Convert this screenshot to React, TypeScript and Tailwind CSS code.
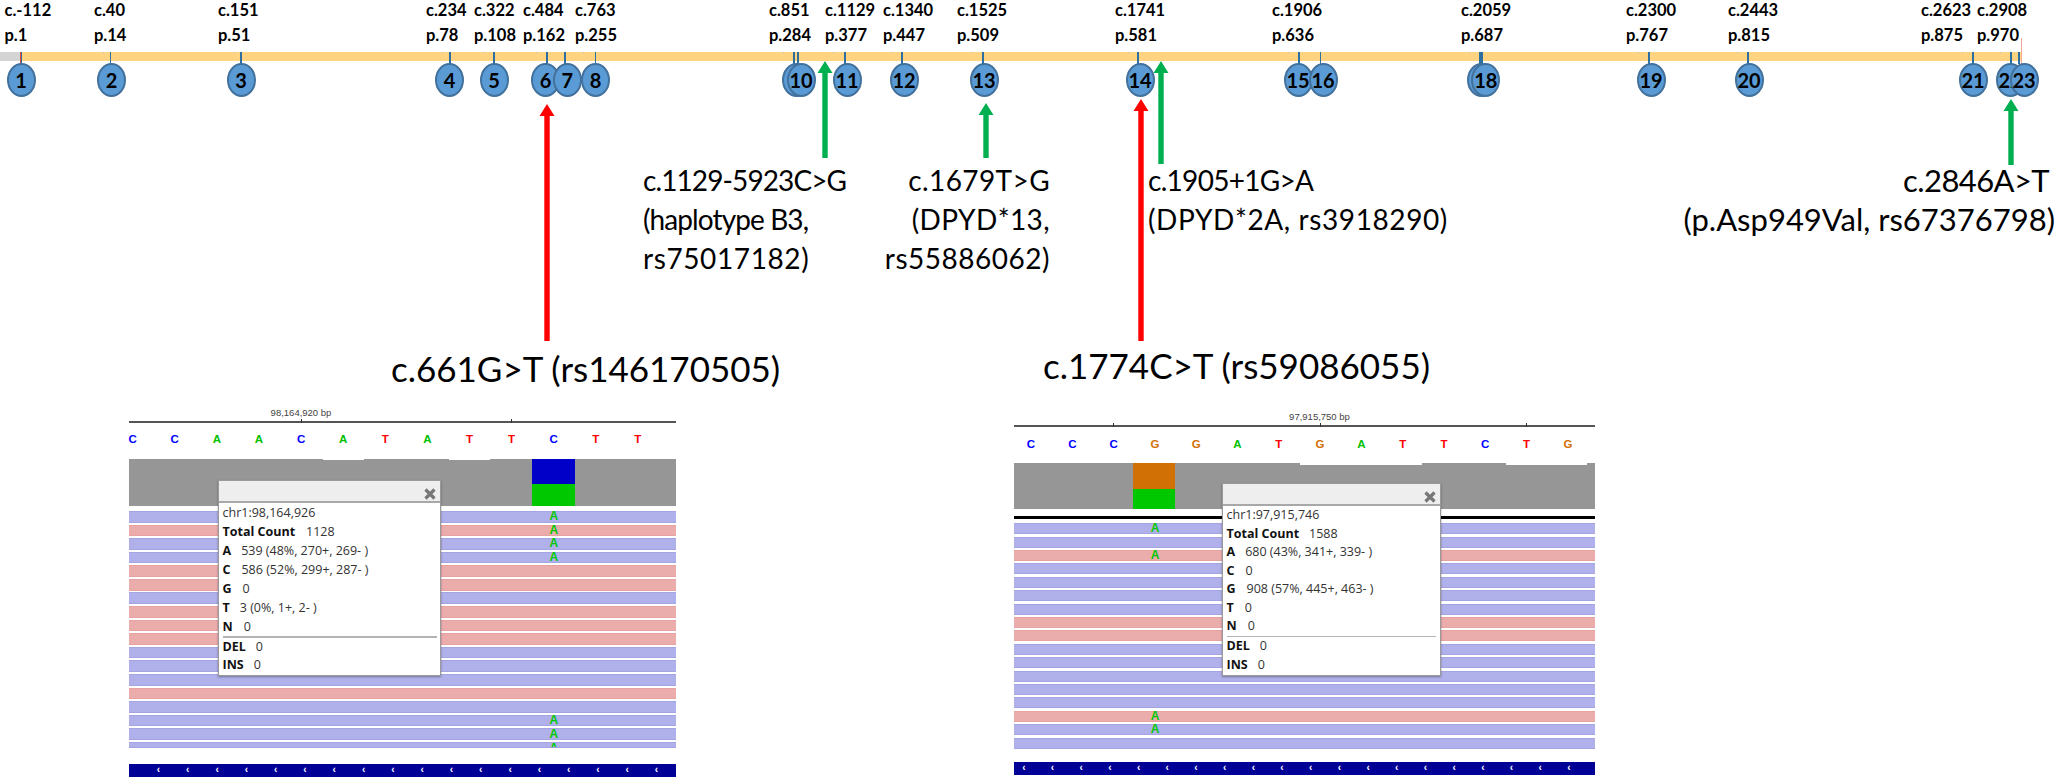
import React from "react";

const labels: [string, string, number][] = [
  ["c.-112", "p.1", 4.5], ["c.40", "p.14", 94], ["c.151", "p.51", 218], ["c.234", "p.78", 426],
  ["c.322", "p.108", 474], ["c.484", "p.162", 523], ["c.763", "p.255", 575], ["c.851", "p.284", 769],
  ["c.1129", "p.377", 825], ["c.1340", "p.447", 883], ["c.1525", "p.509", 957], ["c.1741", "p.581", 1115],
  ["c.1906", "p.636", 1272], ["c.2059", "p.687", 1461], ["c.2300", "p.767", 1626], ["c.2443", "p.815", 1728],
  ["c.2623", "p.875", 1921], ["c.2908", "p.970", 1977],
];
const ticks = [21.4, 110.7, 241, 450, 494, 547, 565, 595.5, 794, 798, 845, 902, 983, 1138, 1299, 1320.5, 1480, 1482, 1649, 1748, 1973, 2011, 2019];
const faint = [102.7, 234, 442, 483, 536, 583, 782.6, 833, 891, 971, 1128, 1288, 1469, 1638, 1737, 1962, 2000];
const circles: [string, number][] = [
  ["1", 21], ["2", 111.6], ["3", 241], ["4", 449.6], ["5", 494], ["6", 545.5], ["7", 567.4], ["8", 595.5],
  ["", 796], ["10", 801], ["11", 847], ["12", 904], ["13", 984], ["14", 1140], ["15", 1298], ["16", 1323],
  ["", 1481.6], ["18", 1485.8], ["19", 1651], ["20", 1749], ["21", 1973], ["22", 2010], ["23", 2024],
];

function Arrow({ x, top, bottom, color }: { x: number; top: number; bottom: number; color: string }) {
  const h = bottom - top;
  return (
    <svg className="absolute" style={{ left: x - 8, top }} width={16} height={h} viewBox={`0 0 16 ${h}`}>
      <polygon points={`8,0 15.5,12 10.7,12 10.7,${h} 5.3,${h} 5.3,12 0.5,12`} fill={color} />
    </svg>
  );
}

const letterColor: Record<string, string> = { C: "text-[#0000ff]", A: "text-[#00c000]", T: "text-[#ff0000]", G: "text-[#d17105]" };

function Mark() {
  return <span className="block w-[8px] text-center font-['Liberation_Sans',sans-serif] text-[12px] font-bold leading-[11px] text-[#00c800]">A</span>;
}

function CloseIcon() {
  return (
    <svg className="absolute right-[4px] bottom-[1px]" width="12" height="12" viewBox="0 0 12 12">
      <path d="M1.5 1.5 L10.5 10.5 M10.5 1.5 L1.5 10.5" stroke="#777777" strokeWidth="3.2" />
    </svg>
  );
}

type PopLine = { b: string; v?: string; cls: string };

function Popup({ pos, coord, lines, lower, row }: { pos: string; coord: string; lines: PopLine[]; lower: PopLine[]; row: string }) {
  return (
    <div className={`absolute flex flex-col border border-[#9a9a9a] bg-white shadow-[0_1px_2px_rgba(0,0,0,0.35)] font-['Open_Sans',sans-serif] text-[12.5px] text-[#333333] ${pos}`}>
      <div className="relative h-[22px] shrink-0 border-b-2 border-[#a8a8a8] bg-[#eeeeee]">
        <CloseIcon />
      </div>
      <div className="flex flex-col px-[3.5px]">
        <div className={row}>{coord}</div>
        {lines.map((l) => (
          <div key={l.b} className={`flex ${row}`}>
            <b className="font-bold text-[#111111]">{l.b}</b>
            <span className={l.cls}>{l.v}</span>
          </div>
        ))}
        <div className="h-[1.5px] bg-[#b4b4b4]" />
        {lower.map((l) => (
          <div key={l.b} className="flex h-[18.5px] leading-[18.5px]">
            <b className="font-bold text-[#111111]">{l.b}</b>
            <span className={l.cls}>{l.v}</span>
          </div>
        ))}
      </div>
    </div>
  );
}

function Read({ color, mark, pad, size, clip }: { color: "b" | "r"; mark: boolean; pad: string; size: string; clip?: boolean }) {
  return (
    <div
      className={`flex border-y ${clip ? "items-start overflow-hidden" : "items-center"} ${size} ${pad} ${
        color === "b" ? "border-[#a4a4e4] bg-[#b0b0ea]" : "border-[#e8a2a2] bg-[#ebacac]"
      }`}
    >
      {mark && <Mark />}
    </div>
  );
}

function Chevrons({ n, cls }: { n: number; cls: string }) {
  return (
    <div className={`flex h-full items-center font-['Liberation_Sans',sans-serif] text-[10px] font-bold leading-none text-white ${cls}`}>
      {Array.from({ length: n }).map((_, i) => (
        <span key={i} className="block w-[var(--s)] shrink-0 text-center">‹</span>
      ))}
    </div>
  );
}

const baseFont = "font-['Lato',sans-serif]";

export default function App() {
  const seq1 = "CCAACATATTCTT".split("");
  const seq2 = "CCCGGATGATTCTG".split("");
  const reads1 = "brbbrrbrrrbbbrbbb".split("") as ("b" | "r")[];
  const marks1 = new Set([0, 1, 2, 3, 15, 16]);
  const reads2 = "bbrbbbbrrbbbbbrbb".split("") as ("b" | "r")[];
  const marks2 = new Set([0, 2, 14, 15]);

  return (
    <div className={`relative h-[780px] w-[2056px] overflow-hidden bg-white text-black ${baseFont}`}>
      {/* Gene track */}
      <div className="absolute left-0 top-[52px] flex h-[9px] w-[2021px]">
        <div className="w-[20px] bg-[#d4d4d4]" />
        <div className="flex-1 bg-[#ffd37f]" />
      </div>
      {faint.map((x) => (
        <div key={x} className="absolute top-[52px] h-[2px] w-px bg-[#d8c8a8]" style={{ left: x }} />
      ))}
      {ticks.map((x) => (
        <div key={x} className="absolute top-[52px] h-[12px] w-[1.5px] bg-[#2f6f9f]" style={{ left: x - 0.75 }} />
      ))}
      <div className="absolute left-[19.5px] top-[52px] h-[12px] w-[1px] bg-[#e04a3a]" />
      <div className="absolute left-[2020.5px] top-[38px] h-[27px] w-[1.5px] bg-[#f4a79a]" />

      {labels.map(([c, p, x]) => (
        <div key={c} className="absolute top-[-2.5px] text-[16.5px] font-bold leading-[25px]" style={{ left: x }}>
          <div className="whitespace-nowrap">{c}</div>
          <div className="whitespace-nowrap">{p}</div>
        </div>
      ))}

      {circles.map(([n, x], i) => (
        <div
          key={i}
          className="absolute top-[63px] flex h-[34px] w-[29px] items-center justify-center rounded-[50%] border-2 border-[#41719c] bg-[#5b9bd5] text-[20px] font-bold leading-none"
          style={{ left: x - 14.5 }}
        >
          {n}
        </div>
      ))}

      {/* Arrows */}
      <Arrow x={547} top={104} bottom={341} color="#ff0000" />
      <Arrow x={1141} top={99} bottom={341} color="#ff0000" />
      <Arrow x={825} top={61} bottom={158} color="#00b050" />
      <Arrow x={986} top={103} bottom={158} color="#00b050" />
      <Arrow x={1161} top={61} bottom={164} color="#00b050" />
      <Arrow x={2011} top={99} bottom={165} color="#00b050" />

      {/* Variant annotations */}
      <div className="absolute left-[643px] top-[161px] text-[28px] leading-[39px] whitespace-nowrap">
        <div className="tracking-[-0.9px]">c.1129-5923C&gt;G</div>
        <div className="tracking-[-0.9px]">(haplotype B3,</div>
        <div className="tracking-[0.6px]">rs75017182)</div>
      </div>
      <div className="absolute right-[1006px] top-[161px] text-right text-[28px] leading-[39px] whitespace-nowrap">
        <div className="tracking-[0.4px]">c.1679T&gt;G</div>
        <div className="tracking-[0.4px]">(DPYD*13,</div>
        <div className="tracking-[0.5px]">rs55886062)</div>
      </div>
      <div className="absolute left-[1148px] top-[161px] text-[28px] leading-[39px] whitespace-nowrap">
        <div className="tracking-[-0.7px]">c.1905+1G&gt;A</div>
        <div className="tracking-[0.6px]">(DPYD*2A, rs3918290)</div>
      </div>
      <div className="absolute right-[1px] top-[161px] text-right text-[31px] leading-[39px] whitespace-nowrap">
        <div className="pr-[6px] tracking-[-0.6px]">c.2846A&gt;T</div>
        <div>(p.Asp949Val, rs67376798)</div>
      </div>
      <div className="absolute left-[391px] top-[344px] text-[35px] leading-[48px] whitespace-nowrap">c.661G&gt;T (rs146170505)</div>
      <div className="absolute left-[1043px] top-[340.5px] text-[35px] leading-[48px] whitespace-nowrap">c.1774C&gt;T (rs59086055)</div>

      {/* IGV panel 1 */}
      <div className="absolute left-[129px] top-[405px] flex w-[547px] flex-col">
        <div className="h-[16px] pr-[203px] text-center font-['Liberation_Sans',sans-serif] text-[9.5px] leading-[15px] text-[#444444]">98,164,920 bp</div>
        <div className="relative h-[1.5px] bg-[#555555]">
          <div className="absolute bottom-0 left-[172px] h-[4px] w-px bg-[#333333]" />
          <div className="absolute bottom-0 left-[382px] h-[4px] w-px bg-[#333333]" />
        </div>
        <div className="ml-[-17.4px] flex h-[36.2px] pt-[10px] font-['Liberation_Sans',sans-serif] text-[11.5px] font-bold leading-[12px]">
          {seq1.map((s, i) => (
            <span key={i} className={`w-[42.1px] shrink-0 text-center ${letterColor[s]}`}>{s}</span>
          ))}
        </div>
        <div className="relative h-[47.3px] bg-[#969696]">
          <div className="absolute left-[193.7px] top-0 h-[1.5px] w-[41px] bg-white" />
          <div className="absolute left-[319.5px] top-0 h-[1.5px] w-[41px] bg-white" />
          <div className="absolute left-[402.8px] top-0 flex h-full w-[43px] flex-col">
            <div className="h-[25px] bg-[#0000c8]" />
            <div className="flex-1 bg-[#00c800]" />
          </div>
        </div>
        <div className="mt-[5px] flex flex-col gap-[1.9px]">
          {reads1.map((c, i) => (
            <Read key={i} color={c} mark={marks1.has(i)} pad="pl-[420.6px]" size="h-[11.7px]" />
          ))}
          <Read color="b" mark clip pad="pl-[420.6px]" size="h-[6.5px]" />
        </div>
        <div className="mt-[15.3px] h-[13.7px] bg-[#000096]">
          <Chevrons n={18} cls="pl-[14.85px] [--s:29.3px]" />
        </div>
        <Popup
          pos="left-[89px] top-[75px] h-[196px] w-[223px]"
          coord="chr1:98,164,926"
          row="h-[19px] leading-[19px]"
          lines={[
            { b: "Total Count", v: "1128", cls: "ml-[11px]" },
            { b: "A", v: "539 (48%, 270+, 269- )", cls: "ml-[10px]" },
            { b: "C", v: "586 (52%, 299+, 287- )", cls: "ml-[11px]" },
            { b: "G", v: "0", cls: "ml-[11px]" },
            { b: "T", v: "3 (0%, 1+, 2- )", cls: "ml-[10px]" },
            { b: "N", v: "0", cls: "ml-[11px]" },
          ]}
          lower={[
            { b: "DEL", v: "0", cls: "ml-[10px]" },
            { b: "INS", v: "0", cls: "ml-[10px]" },
          ]}
        />
      </div>

      {/* IGV panel 2 */}
      <div className="absolute left-[1014px] top-[409px] flex w-[581px] flex-col">
        <div className="h-[16px] pl-[30px] text-center font-['Liberation_Sans',sans-serif] text-[9.5px] leading-[15px] text-[#444444]">97,915,750 bp</div>
        <div className="relative h-[1.5px] bg-[#555555]">
          <div className="absolute bottom-0 left-[99px] h-[4px] w-px bg-[#333333]" />
          <div className="absolute bottom-0 left-[305.6px] h-[4px] w-px bg-[#333333]" />
          <div className="absolute bottom-0 left-[512px] h-[4px] w-px bg-[#333333]" />
        </div>
        <div className="ml-[-3.65px] flex h-[36.5px] pt-[11px] font-['Liberation_Sans',sans-serif] text-[11.5px] font-bold leading-[12px]">
          {seq2.map((s, i) => (
            <span key={i} className={`w-[41.3px] shrink-0 text-center ${letterColor[s]}`}>{s}</span>
          ))}
        </div>
        <div className="relative h-[45.7px] bg-[#969696]">
          <div className="absolute left-[286px] top-0 h-[1.5px] w-[122px] bg-white" />
          <div className="absolute left-[492px] top-0 h-[1.5px] w-[81px] bg-white" />
          <div className="absolute left-[119px] top-0 flex h-full w-[42px] flex-col">
            <div className="h-[26px] bg-[#d17105]" />
            <div className="flex-1 bg-[#00c800]" />
          </div>
        </div>
        <div className="mt-[7px] h-[3px] bg-black" />
        <div className="mt-[4.6px] flex flex-col gap-[2.4px]">
          {reads2.map((c, i) => (
            <Read key={i} color={c} mark={marks2.has(i)} pad="pl-[136.7px]" size="h-[11px]" />
          ))}
        </div>
        <div className="mt-[13.3px] h-[13px] bg-[#000096]">
          <Chevrons n={20} cls="ml-[-4.55px] [--s:28.7px]" />
        </div>
        <Popup
          pos="left-[208px] top-[74.3px] h-[192.4px] w-[218.5px]"
          coord="chr1:97,915,746"
          row="h-[18.5px] leading-[18.5px]"
          lines={[
            { b: "Total Count", v: "1588", cls: "ml-[10px]" },
            { b: "A", v: "680 (43%, 341+, 339- )", cls: "ml-[10px]" },
            { b: "C", v: "0", cls: "ml-[11px]" },
            { b: "G", v: "908 (57%, 445+, 463- )", cls: "ml-[11px]" },
            { b: "T", v: "0", cls: "ml-[11px]" },
            { b: "N", v: "0", cls: "ml-[11px]" },
          ]}
          lower={[
            { b: "DEL", v: "0", cls: "ml-[10px]" },
            { b: "INS", v: "0", cls: "ml-[10px]" },
          ]}
        />
      </div>
    </div>
  );
}
